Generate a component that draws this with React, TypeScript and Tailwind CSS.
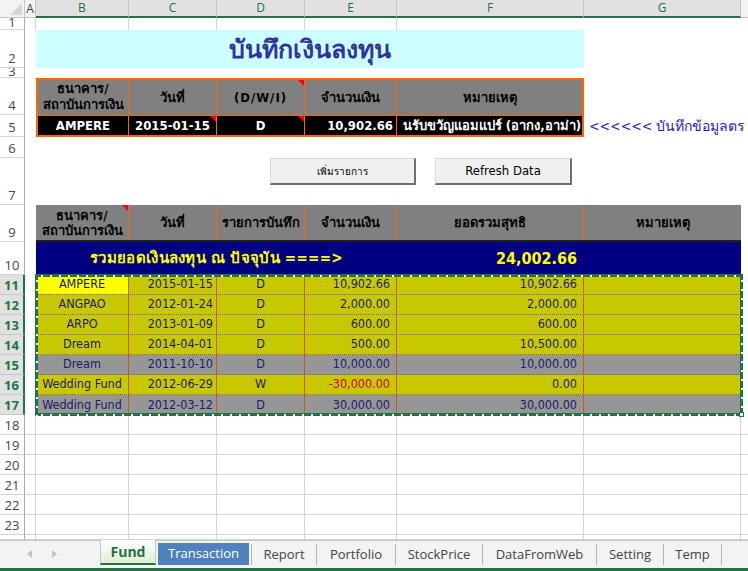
import React from "react";

// sheet font approximates Tahoma, ui font approximates Segoe UI
const sheet = "font-['Tahoma','DejaVu_Sans_Condensed','DejaVu_Sans',sans-serif]";
const ui = "font-['Segoe_UI','Open_Sans','Noto_Sans',sans-serif]";

type Head = { n: string; h: string; sel?: boolean; lh?: string };

const heads: Head[] = [
  { n: "1", h: "h-[12px]", lh: "leading-[11px]" },
  { n: "2", h: "h-[38px]" },
  { n: "3", h: "h-[10px]", lh: "leading-[9px]" },
  { n: "4", h: "h-[37px]" },
  { n: "5", h: "h-[22px]" },
  { n: "6", h: "h-[21px]" },
  { n: "7", h: "h-[47px]" },
  { n: "9", h: "h-[37px]" },
  { n: "10", h: "h-[33px]" },
  { n: "11", h: "h-[20px]", sel: true },
  { n: "12", h: "h-[20px]", sel: true },
  { n: "13", h: "h-[20px]", sel: true },
  { n: "14", h: "h-[20px]", sel: true },
  { n: "15", h: "h-[20px]", sel: true },
  { n: "16", h: "h-[20px]", sel: true },
  { n: "17", h: "h-[20px]", sel: true },
  { n: "18", h: "h-[20px]" },
  { n: "19", h: "h-[20px]" },
  { n: "20", h: "h-[20px]" },
  { n: "21", h: "h-[20px]" },
  { n: "22", h: "h-[20px]" },
  { n: "23", h: "h-[20px]" },
  { n: "", h: "h-[5px]" },
];

type Fund = {
  name: string;
  date: string;
  type: string;
  amt: string;
  total: string;
  gray?: boolean;
  neg?: boolean;
  hi?: boolean;
};

const funds: Fund[] = [
  { name: "AMPERE", date: "2015-01-15", type: "D", amt: "10,902.66", total: "10,902.66", hi: true },
  { name: "ANGPAO", date: "2012-01-24", type: "D", amt: "2,000.00", total: "2,000.00" },
  { name: "ARPO", date: "2013-01-09", type: "D", amt: "600.00", total: "600.00" },
  { name: "Dream", date: "2014-04-01", type: "D", amt: "500.00", total: "10,500.00" },
  { name: "Dream", date: "2011-10-10", type: "D", amt: "10,000.00", total: "10,000.00", gray: true },
  { name: "Wedding Fund", date: "2012-06-29", type: "W", amt: "-30,000.00", total: "0.00", neg: true },
  { name: "Wedding Fund", date: "2012-03-12", type: "D", amt: "30,000.00", total: "30,000.00", gray: true },
];

const tabs = [
  { name: "Report", w: "w-[66px] border-l" },
  { name: "Portfolio", w: "w-[79px]" },
  { name: "StockPrice", w: "w-[87px]" },
  { name: "DataFromWeb", w: "w-[114px]" },
  { name: "Setting", w: "w-[67px]" },
  { name: "Temp", w: "w-[58px]" },
];

function Note() {
  return (
    <span className="absolute right-0 top-0 h-0 w-0 border-l-[6px] border-t-[6px] border-l-transparent border-t-[#ff0000]" />
  );
}

function RowHeader({ n, h, sel, lh }: Head) {
  return (
    <div
      className={`${h} flex items-end justify-center overflow-hidden border-b pb-[1px] text-[13px] ${lh ?? "leading-[16px]"} ${
        sel
          ? "border-r-2 border-b-[#c6c6c6] border-r-[#217346] bg-[#e1e1e1] font-bold text-[#217346]"
          : "border-r border-b-[#d4d4d4] border-r-[#ababab] bg-white text-[#444]"
      }`}
    >
      {n}
    </div>
  );
}

function FundRow({ f, last }: { f: Fund; last: boolean }) {
  const line = "border-r border-[#c65a1a]";
  return (
    <div
      className={`flex h-[20px] text-[12.5px] text-[#1c1c6e] ${f.gray ? "bg-[#969696]" : "bg-[#c8c800]"} ${
        last ? "" : "border-b border-dotted border-b-[#7d6540]"
      }`}
    >
      <div className={`w-[93px] ${line} ${f.hi ? "bg-[#ffff00]" : ""} flex items-center justify-center`}>{f.name}</div>
      <div className={`w-[88px] ${line} flex items-center justify-end pr-[3px]`}>{f.date}</div>
      <div className={`w-[88px] ${line} flex items-center justify-center`}>{f.type}</div>
      <div className={`w-[92px] ${line} flex items-center justify-end pr-[6px] ${f.neg ? "text-[#d00000]" : ""}`}>
        {f.amt}
      </div>
      <div className={`w-[187px] ${line} flex items-center justify-end pr-[6px]`}>{f.total}</div>
      <div className="w-[157px]" />
    </div>
  );
}

function GridRow({ h }: { h: string }) {
  const c = "border-r border-b border-[#d4d4d4]";
  return (
    <div className={`flex ${h}`}>
      <div className={`w-[11px] ${c}`} />
      <div className={`w-[93px] ${c}`} />
      <div className={`w-[88px] ${c}`} />
      <div className={`w-[88px] ${c}`} />
      <div className={`w-[92px] ${c}`} />
      <div className={`w-[187px] ${c}`} />
      <div className={`w-[157px] ${c}`} />
      <div className="flex-1 border-b border-[#d4d4d4]" />
    </div>
  );
}

function Ants({ dir }: { dir: "h" | "v" }) {
  return dir === "h" ? (
    <div className="flex h-[3px] w-full items-center bg-[#217346]">
      <div className="h-[2px] w-full bg-[image:repeating-linear-gradient(90deg,transparent_0px,transparent_6px,#ffffff_6px,#ffffff_8px,transparent_8px,transparent_9px)]" />
    </div>
  ) : (
    <div className="flex h-full w-[3px] justify-center bg-[#217346]">
      <div className="h-full w-[2px] bg-[image:repeating-linear-gradient(180deg,transparent_0px,transparent_6px,#ffffff_6px,#ffffff_8px,transparent_8px,transparent_9px)]" />
    </div>
  );
}

export default function App() {
  const colHead = "border-r border-[#c6c6c6] border-b-2 border-b-[#217346] bg-[#e1e1e1] text-[#217346] flex items-center justify-center";
  const grid = "border-r border-[#d4d4d4]";
  const th = "border-r border-[#ff6600] flex items-center justify-center relative";
  const th9 = "border-r border-[#ff6600] flex items-center justify-center relative text-center leading-[15px]";

  return (
    <div className={`flex h-[571px] w-[748px] flex-col overflow-hidden bg-white ${sheet}`}>
      {/* column headers */}
      <div className={`flex h-[18px] shrink-0 text-[12px] ${ui}`}>
        <div className="w-[25px] border-r border-b border-[#c6c6c6] bg-[#f3f3f3]">
          <svg width="24" height="17" viewBox="0 0 24 17">
            <polygon points="22,3 22,15 10,15" fill="#d6d6d6" />
          </svg>
        </div>
        <div className="flex w-[11px] items-center justify-center border-r border-b border-[#c6c6c6] bg-[#f3f3f3] text-[#444]">
          A
        </div>
        <div className={`w-[93px] ${colHead}`}>B</div>
        <div className={`w-[88px] ${colHead}`}>C</div>
        <div className={`w-[88px] ${colHead}`}>D</div>
        <div className={`w-[92px] ${colHead}`}>E</div>
        <div className={`w-[187px] ${colHead}`}>F</div>
        <div className={`w-[157px] ${colHead}`}>G</div>
        <div className="flex-1 border-b border-[#c6c6c6] bg-[#f3f3f3]" />
      </div>

      <div className="flex h-[522px] shrink-0 overflow-hidden">
        {/* row headers */}
        <div className={`flex w-[25px] shrink-0 flex-col ${ui}`}>
          {heads.map((hd, i) => (
            <RowHeader key={i} {...hd} />
          ))}
        </div>

        {/* cells */}
        <div className="flex min-w-0 flex-1 flex-col">
          {/* row 1 */}
          <div className="flex h-[12px]">
            <div className={`w-[11px] ${grid}`} />
            <div className={`w-[93px] ${grid}`} />
            <div className={`w-[88px] ${grid}`} />
            <div className={`w-[88px] ${grid}`} />
            <div className={`w-[92px] ${grid}`} />
            <div className="w-[187px]" />
          </div>

          {/* row 2 title */}
          <div className="flex h-[38px]">
            <div className="w-[11px]" />
            <div className="flex w-[548px] items-end justify-center bg-[#ccffff] pb-[2px] text-[25px] font-bold leading-[32px] text-[#333399]">
              บันทึกเงินลงทุน
            </div>
          </div>

          {/* row 3 */}
          <div className="h-[10px]" />

          {/* rows 4-5 entry form */}
          <div className="flex h-[59px]">
            <div className="w-[11px]" />
            <div className="flex w-[548px] flex-col border-2 border-[#ff6600]">
              <div className="flex h-[36px] border-b border-[#ff6600] bg-[#808080] text-[13px] font-bold text-black">
                <div className={`w-[91px] ${th} flex-col leading-[16px]`}>
                  <span>ธนาคาร/</span>
                  <span>สถาบันการเงิน</span>
                </div>
                <div className={`w-[88px] ${th}`}>วันที่</div>
                <div className={`w-[88px] ${th} tracking-[1px]`}>
                  (D/W/I)
                  <Note />
                </div>
                <div className={`w-[92px] ${th}`}>จำนวนเงิน</div>
                <div className="flex w-[185px] items-center justify-center">หมายเหตุ</div>
              </div>
              <div className="flex flex-1 bg-black text-[13px] font-bold text-white">
                <div className={`w-[91px] ${th}`}>AMPERE</div>
                <div className={`w-[88px] ${th}`}>
                  2015-01-15
                  <Note />
                </div>
                <div className={`w-[88px] ${th}`}>
                  D
                  <Note />
                </div>
                <div className="relative flex w-[92px] items-center justify-end border-r border-[#ff6600] pr-[3px]">
                  10,902.66
                </div>
                <div className="flex w-[185px] items-center justify-end overflow-hidden whitespace-nowrap pr-[1px]">
                  นรับขวัญแอมแปร์ (อากง,อาม่า)
                </div>
              </div>
            </div>
            <div className="flex min-w-0 flex-1 flex-col">
              <div className="h-[37px]" />
              <div className="flex h-[22px] items-center overflow-hidden whitespace-nowrap pl-[5px] text-[14px] text-[#1a1acc]">
                {"<<<<<< บันทึกข้อมูลตร"}
              </div>
            </div>
          </div>

          {/* row 6 */}
          <div className="h-[21px]" />

          {/* row 7 buttons */}
          <div className="flex h-[47px] items-start">
            <button className="ml-[245px] h-[27px] w-[146px] border border-r-2 border-b-2 border-[#dadada] border-r-[#6f6f6f] border-b-[#6f6f6f] bg-[#f0f0f0] text-[10px] text-black">
              เพิ่มรายการ
            </button>
            <button className="ml-[19px] h-[27px] w-[137px] border border-r-2 border-b-2 border-[#dadada] border-r-[#6f6f6f] border-b-[#6f6f6f] bg-[#f0f0f0] text-[13px] text-black">
              Refresh Data
            </button>
          </div>

          {/* row 9 header */}
          <div className="flex h-[37px]">
            <div className="w-[11px]" />
            <div className="flex w-[705px] border-b-2 border-[#202020] bg-[#808080] text-[13px] font-bold text-black">
              <div className={`w-[93px] ${th9} flex-col`}>
                <span>ธนาคาร/</span>
                <span>สถาบันการเงิน</span>
                <Note />
              </div>
              <div className={`w-[88px] ${th9}`}>วันที่</div>
              <div className={`w-[88px] ${th9}`}>รายการบันทึก</div>
              <div className={`w-[92px] ${th9}`}>จำนวนเงิน</div>
              <div className={`w-[187px] ${th9}`}>ยอดรวมสุทธิ</div>
              <div className="flex w-[157px] items-center justify-center">หมายเหตุ</div>
            </div>
          </div>

          {/* row 10 total */}
          <div className="flex h-[33px]">
            <div className="w-[11px]" />
            <div className="flex w-[705px] bg-[#000080] font-bold text-[#ffff00]">
              <div className="flex w-[361px] items-center justify-center text-[15px] tracking-[0.3px]">
                {"รวมยอดเงินลงทุน ณ ปัจจุบัน ====>"}
              </div>
              <div className="flex w-[187px] items-center justify-end pr-[7px] text-[16px]">24,002.66</div>
            </div>
          </div>

          {/* rows 11-17 data with selection marquee */}
          <div className="flex">
            <div className="w-[11px]" />
            <div className="relative w-[705px]">
              {funds.map((f, i) => (
                <FundRow key={i} f={f} last={i === funds.length - 1} />
              ))}
              <div className="pointer-events-none absolute -top-px -right-[2px] -bottom-px -left-px flex flex-col justify-between">
                <Ants dir="h" />
                <Ants dir="h" />
              </div>
              <div className="pointer-events-none absolute -top-px -right-[2px] -bottom-px -left-px flex justify-between">
                <Ants dir="v" />
                <Ants dir="v" />
              </div>
              <span className="absolute -right-[3px] -bottom-[2px] h-[5px] w-[5px] border border-[#217346] bg-white" />
            </div>
          </div>

          {/* rows 18-23 empty */}
          <GridRow h="h-[20px]" />
          <GridRow h="h-[20px]" />
          <GridRow h="h-[20px]" />
          <GridRow h="h-[20px]" />
          <GridRow h="h-[20px]" />
          <GridRow h="h-[20px]" />
          <GridRow h="h-[5px]" />
        </div>
      </div>

      {/* sheet tabs */}
      <div className={`flex h-[28px] shrink-0 items-start border-t border-[#c6c6c6] bg-[#f3f3f3] text-[13px] ${ui}`}>
        <div className="flex h-[26px] w-[100px] items-center gap-[20px] pl-[27px]">
          <svg width="5" height="8" viewBox="0 0 5 8">
            <polygon points="5,0 5,8 0,4" fill="#c4c4c4" />
          </svg>
          <svg width="5" height="8" viewBox="0 0 5 8">
            <polygon points="0,0 0,8 5,4" fill="#c4c4c4" />
          </svg>
        </div>
        <div className="-mt-px flex h-[25px] w-[56px] items-center justify-center border-x border-b-2 border-[#c6c6c6] border-b-[#217346] bg-[linear-gradient(#ffffff,#e0eed6)] text-[14px] font-bold text-[#217346]">
          Fund
        </div>
        <div className="mt-[2px] ml-[2px] flex h-[22px] w-[91px] items-center justify-center bg-[#4f81bd] text-white">
          Transaction
        </div>
        <div className="ml-[2px] flex">
          {tabs.map((t) => (
            <div
              key={t.name}
              className={`mt-[3px] flex h-[21px] items-center justify-center border-r border-[#b4b4b4] text-[#444] ${t.w}`}
            >
              {t.name}
            </div>
          ))}
        </div>
      </div>
      <div className="h-[3px] shrink-0 bg-[#217346]" />
    </div>
  );
}
